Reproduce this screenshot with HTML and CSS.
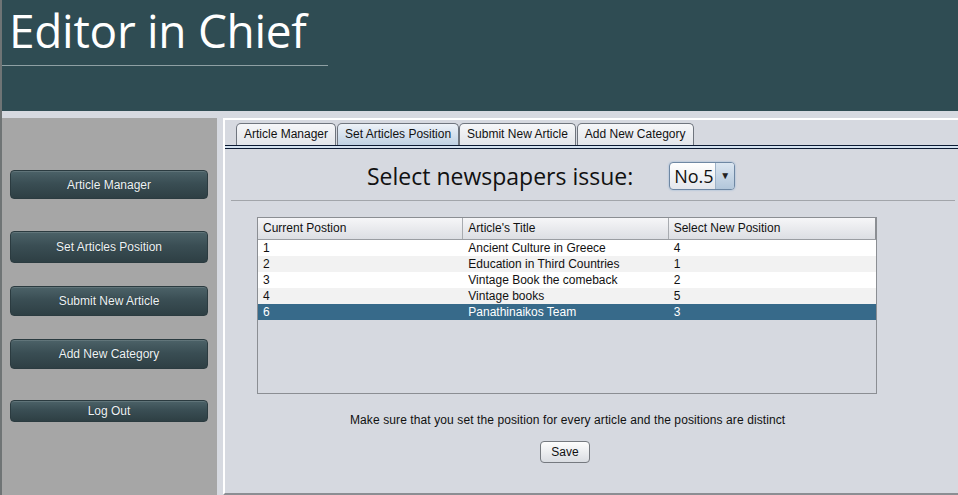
FILE: index.html
```html
<!DOCTYPE html>
<html>
<head>
<meta charset="utf-8">
<link rel="stylesheet" href="styles.css">
</head>
<body>
<div class="app">
  <header class="header">
    <h1 class="title">Editor in Chief</h1>
    <div class="title-rule"></div>
  </header>
  <div class="body">
    <aside class="sidebar">
      <button class="side-btn b1">Article Manager</button>
      <button class="side-btn b2">Set Articles Position</button>
      <button class="side-btn b3">Submit New Article</button>
      <button class="side-btn b4">Add New Category</button>
      <button class="side-btn b5">Log Out</button>
    </aside>
    <main class="main">
      <div class="tabs">
        <div class="tab">Article Manager</div>
        <div class="tab active">Set Articles Position</div>
        <div class="tab">Submit New Article</div>
        <div class="tab">Add New Category</div>
      </div>
      <div class="tab-rule"></div>
      <div class="panel">
        <div class="issue-row">
          <span class="issue-label">Select newspapers issue:</span>
          <div class="combo"><span class="combo-val">No.5</span><span class="combo-arrow">&#9660;</span></div>
        </div>
        <div class="sep"></div>
        <div class="table">
          <div class="row head">
            <div class="cell">Current Postion</div>
            <div class="cell">Article's Title</div>
            <div class="cell">Select New Position</div>
          </div>
          <div class="row"><div class="cell">1</div><div class="cell">Ancient Culture in Greece</div><div class="cell">4</div></div>
          <div class="row alt"><div class="cell">2</div><div class="cell">Education in Third Countries</div><div class="cell">1</div></div>
          <div class="row"><div class="cell">3</div><div class="cell">Vintage Book the comeback</div><div class="cell">2</div></div>
          <div class="row alt"><div class="cell">4</div><div class="cell">Vintage books</div><div class="cell">5</div></div>
          <div class="row sel"><div class="cell">6</div><div class="cell">Panathinaikos Team</div><div class="cell">3</div></div>
        </div>
        <p class="note">Make sure that you set the position for every article and the positions are distinct</p>
        <button class="save">Save</button>
      </div>
    </main>
  </div>
</div>
</body>
</html>
```

FILE: styles.css
```css
* { box-sizing: border-box; }
html, body { margin: 0; padding: 0; }
body {
  width: 958px;
  height: 495px;
  overflow: hidden;
  background: #d6d9e0;
  font-family: "Liberation Sans", Arial, sans-serif;
  font-size: 12px;
  color: #111;
}
.app {
  height: 495px;
  border-left: 2px solid #6f7475;
  display: flex;
  flex-direction: column;
}
.header {
  height: 111px;
  flex: none;
  background: #2f4c53;
  padding-top: 3px;
}
.title {
  margin: 0 0 0 7px;
  font-family: "Open Sans", sans-serif;
  font-weight: 400;
  font-size: 46px;
  line-height: 54px;
  letter-spacing: -0.3px;
  color: #ffffff;
}
.title-rule {
  margin-top: 8px;
  width: 326px;
  height: 1px;
  background: #8fa0a4;
}
.body {
  flex: 1;
  display: flex;
  padding-top: 7px;
}
.sidebar {
  width: 215px;
  flex: none;
  background: #a6a6a6;
  display: flex;
  flex-direction: column;
  align-items: flex-start;
  padding-left: 8px;
}
.side-btn {
  width: 198px;
  border: 1px solid #2b3b40;
  border-radius: 4px;
  background: linear-gradient(#4c6268 0%, #3a4e54 45%, #2e3f44 100%);
  color: #eef3f5;
  font-family: "Liberation Sans", Arial, sans-serif;
  font-size: 12px;
  text-shadow: 0 0 1px #1d2a2e;
  box-shadow: inset 0 1px 0 rgba(255,255,255,0.12);
  padding: 0;
}
.b1 { margin-top: 52px; height: 29px; }
.b2 { margin-top: 32px; height: 32px; }
.b3 { margin-top: 23px; height: 30px; }
.b4 { margin-top: 23px; height: 30px; }
.b5 { margin-top: 31px; height: 22px; }
.main {
  flex: 1;
  margin-left: 6px;
  border-top: 2px solid #ffffff;
  border-left: 2px solid #ffffff;
  border-bottom: 2px solid #8b8e93;
  display: flex;
  flex-direction: column;
}
.tabs {
  display: flex;
  padding: 3px 0 0 11px;
  height: 25px;
  align-items: flex-end;
}
.tab {
  height: 22px;
  line-height: 20px;
  padding: 0 7px 0 7px;
  border: 1px solid #6f757e;
  border-bottom: none;
  border-radius: 5px 5px 0 0;
  background: linear-gradient(#f6f7f9, #e2e5ea);
  margin-right: 1px;
  color: #111;
}
.tab.active {
  background: linear-gradient(#edf2f8, #bfd1e3);
  margin-right: 0;
}
.tab-rule {
  height: 4px;
  border-top: 1px solid #0b1a33;
  border-bottom: 1px solid #0b1a33;
  background: #d3e1ef;
}
.panel {
  flex: 1;
  display: flex;
  flex-direction: column;
  align-items: flex-start;
}
.issue-row {
  display: flex;
  align-items: center;
  margin-top: 13px;
  margin-left: 142px;
  height: 28px;
}
.issue-label {
  font-family: "Open Sans", sans-serif;
  font-size: 23px;
  color: #111;
  margin-right: 36px;
}
.combo {
  width: 66px;
  height: 28px;
  display: flex;
  border: 1px solid #6e87a3;
  border-radius: 4px;
  background: linear-gradient(#ffffff, #e4e7ec);
  box-shadow: 0 0 2px #8fb0d4;
  overflow: hidden;
}
.combo-val {
  flex: 1;
  font-family: "Open Sans", sans-serif;
  font-size: 18px;
  line-height: 26px;
  padding-left: 4px;
  color: #111;
}
.combo-arrow {
  width: 19px;
  border-left: 1px solid #9eb2c8;
  background: linear-gradient(#dbe6f1, #b2c6da);
  font-size: 10px;
  line-height: 26px;
  text-align: center;
  color: #222;
}
.sep {
  align-self: stretch;
  height: 1px;
  background: #a2a5aa;
  margin: 10px 3px 0 6px;
}
.table {
  margin-top: 16px;
  margin-left: 32px;
  width: 620px;
  height: 177px;
  border: 1px solid #8b8e93;
  background: #d6d9e0;
}
.row {
  display: flex;
  height: 16px;
  background: #ffffff;
}
.row.alt { background: #f2f2f2; }
.row.sel { background: #376a8a; color: #ffffff; }
.row.head {
  height: 22px;
  background: linear-gradient(#f6f6f8, #dcdee3);
  border-bottom: 1px solid #9a9da2;
}
.cell {
  width: 206px;
  padding-left: 5px;
  line-height: 16px;
  white-space: nowrap;
}
.cell:nth-child(3) { width: 208px; }
.head .cell {
  line-height: 21px;
  border-right: 1px solid #a8abb0;
}
.head .cell:last-child { border-right: 1px solid #8b8e93; }
.note {
  margin: 19px 0 0 125px;
  font-size: 12px;
  letter-spacing: 0.1px;
  color: #111;
}
.save {
  margin-top: 14px;
  margin-left: 315px;
  width: 50px;
  height: 22px;
  border: 1px solid #75797f;
  border-radius: 4px;
  background: linear-gradient(#fdfdfd, #dadde2);
  font-family: "Liberation Sans", Arial, sans-serif;
  font-size: 12px;
  color: #111;
  padding: 0;
}
```
